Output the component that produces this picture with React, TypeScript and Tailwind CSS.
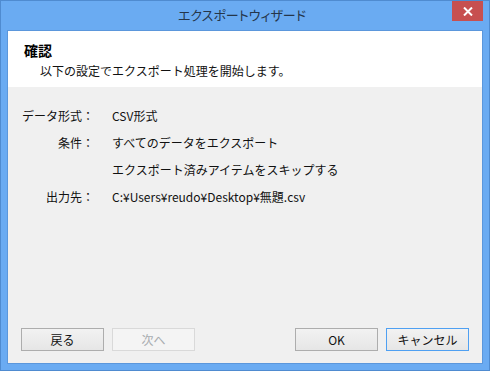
import React from "react";

const font = "[font-family:'Noto_Sans_CJK_JP','Noto_Sans',sans-serif]";
const palt = "[font-feature-settings:'palt']";

function Btn({ children, disabled, primary }: { children: React.ReactNode; disabled?: boolean; primary?: boolean }) {
  const base = "w-[83px] h-[23px] flex items-center justify-center text-[12px] leading-none border";
  if (disabled)
    return <div className={`${base} border-[#d9d9d9] bg-[#f4f4f4] text-[#a8acb0]`}>{children}</div>;
  return (
    <div
      className={`${base} ${primary ? "border-[#4fa0f2]" : "border-[#adadad]"} bg-gradient-to-b from-[#f2f2f2] to-[#e6e6e6] text-[#111]`}
    >
      {children}
    </div>
  );
}

export default function App() {
  const rows: [string, string][] = [
    ["データ形式：", "CSV形式"],
    ["条件：", "すべてのデータをエクスポート"],
    ["", "エクスポート済みアイテムをスキップする"],
    ["出力先：", "C:¥Users¥reudo¥Desktop¥無題.csv"],
  ];
  return (
    <div className={`w-[490px] h-[371px] bg-[#6aabf2] border border-[#4f8bd0] flex flex-col ${font}`}>
      <div className="h-[29px] grid grid-cols-[1fr_auto_1fr] items-start pr-[6px]">
        <div />
        <div className={`h-[29px] flex items-center text-[13px] text-[#25364a] pb-[1px] ${palt}`}>エクスポートウィザード</div>
        <div className="justify-self-end w-[31px] h-[20px] bg-[#c75050] flex items-center justify-center">
          <svg width="10" height="9" viewBox="0 0 10 9">
            <path d="M1 0.5 L9 8.5 M9 0.5 L1 8.5" stroke="#fff" strokeWidth="2" />
          </svg>
        </div>
      </div>
      <div className="mx-[6px] h-[334px] border border-[#5b97dc] bg-[#f0f0f0] flex flex-col">
        <div className="h-[56px] bg-white pt-[10px]">
          <div className="pl-[16px] text-[14px] leading-[18px] font-bold text-black">確認</div>
          <div className="pl-[32px] mt-[4px] text-[12px] leading-[16px] text-[#111]">
            以下の設定でエクスポート処理を開始します。
          </div>
        </div>
        <div className="flex-1 pt-[21px]">
          <div className="grid grid-cols-[86px_1fr] gap-x-[18px] gap-y-[11px] text-[12px] leading-[16px] text-[#111]">
            {rows.map(([l, v], i) => (
              <React.Fragment key={i}>
                <div className="text-right">{l}</div>
                <div>{v}</div>
              </React.Fragment>
            ))}
          </div>
        </div>
        <div className="flex items-center px-[13px] pb-[12px]">
          <div className="flex gap-[8px]">
            <Btn>戻る</Btn>
            <Btn disabled>次へ</Btn>
          </div>
          <div className="flex-1" />
          <div className="flex gap-[8px]">
            <Btn>OK</Btn>
            <Btn primary>キャンセル</Btn>
          </div>
        </div>
      </div>
    </div>
  );
}
